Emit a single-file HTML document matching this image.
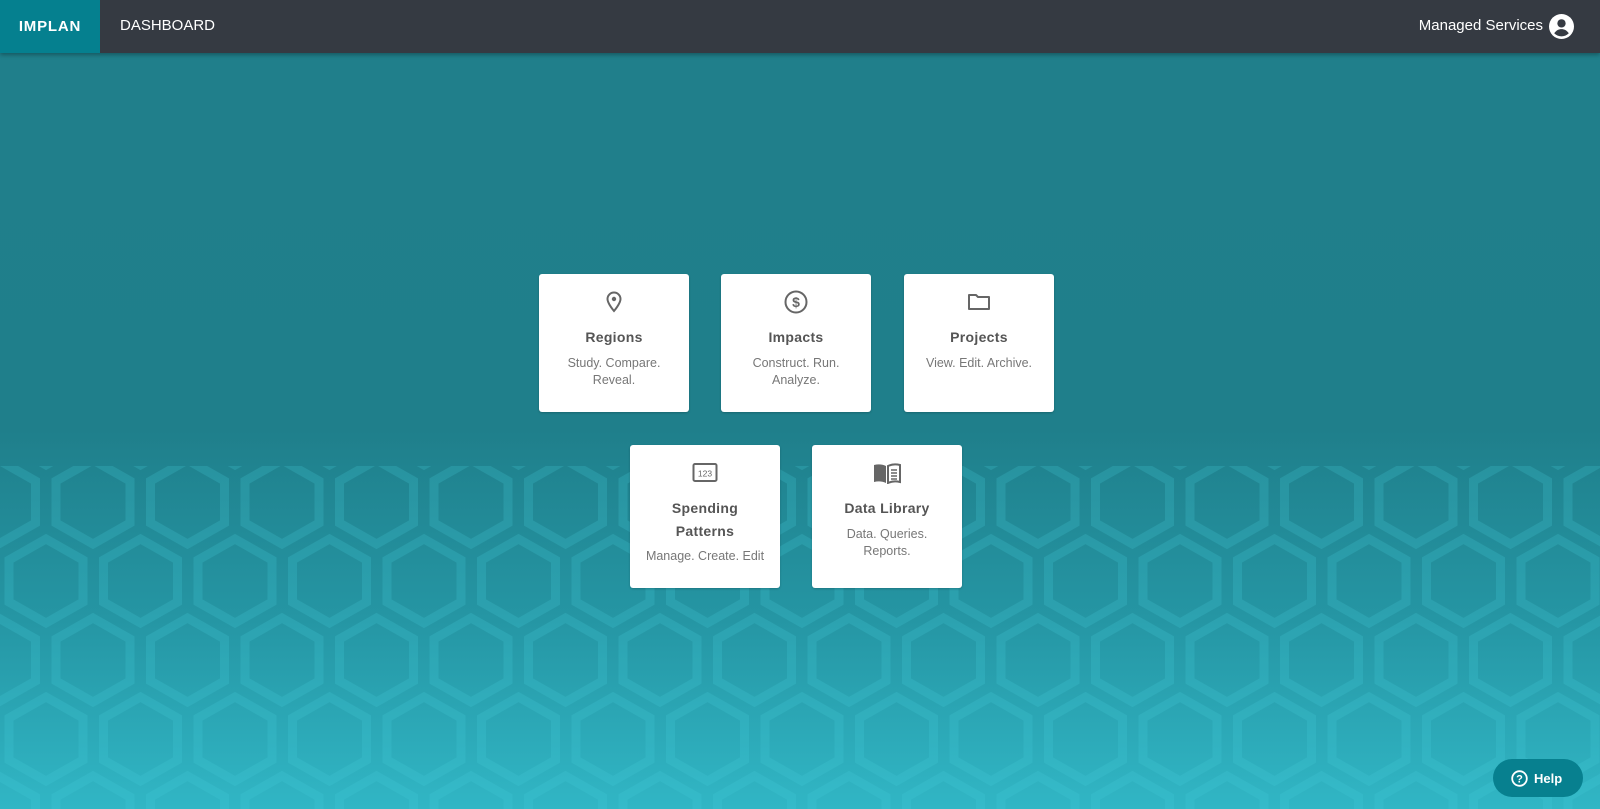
<!DOCTYPE html>
<html><head><meta charset="utf-8"><style>
*{margin:0;padding:0;box-sizing:border-box}
body{width:1600px;height:809px;overflow:hidden;font-family:"Liberation Sans",sans-serif;background:linear-gradient(#207f8b 0px,#1f7f8b 430px,#2596a4 620px,#31b6c5 809px);position:relative}
.hdr{position:absolute;left:0;top:0;width:1600px;height:53px;background:#353a42;box-shadow:0 2px 4px rgba(0,0,0,.3);z-index:3}
.logo{position:absolute;left:0;top:0;width:100px;height:53px;background:#05808f;color:#fff;font-weight:bold;font-size:15px;line-height:53px;text-align:center;letter-spacing:.8px}
.dash{position:absolute;left:120px;top:17px;color:#fff;font-size:15px}
.user{position:absolute;right:57px;top:17px;color:#fff;font-size:15px}
.av{position:absolute;left:1549px;top:14px;width:25px;height:25px}
svg.bg{position:absolute;left:0;top:0;z-index:0}
.card{position:absolute;background:#fff;border-radius:3px;width:150px;text-align:center;z-index:2;box-shadow:0 1px 2px rgba(0,0,0,.2)}
.card svg{display:block;margin:0 auto}
.t{font-weight:bold;font-size:14px;color:#555;line-height:23px;letter-spacing:.3px}
.s{font-size:12.5px;color:#777;line-height:17px;margin-top:6px}
.help{position:absolute;left:1493px;top:759px;width:90px;height:38px;border-radius:19px;background:#07808f;color:#fff;font-weight:bold;font-size:13px;z-index:3}
</style></head><body>
<svg class="bg" width="1600" height="809">
<defs>
<pattern id="hx" patternUnits="userSpaceOnUse" x="46" y="455" width="94.5" height="158">
<g fill="none" stroke="rgba(70,205,220,0.22)" stroke-width="9">
<path d="M47 5L84 26V68L47 89L10 68V26Z"/>
<path d="M0 84L37 105V147L0 168L-37 147V105Z"/>
<path d="M94.5 84L131.5 105V147L94.5 168L57.5 147V105Z"/>
<path d="M0 -74L37 -53V-11L0 10L-37 -11V-53Z"/>
<path d="M94.5 -74L131.5 -53V-11L94.5 10L57.5 -11V-53Z"/>
<path d="M47 163L84 184V226L47 247L10 226V184Z"/>
</g></pattern>
</defs>
<rect y="466" width="1600" height="343" fill="url(#hx)"/>
</svg>
<div class="hdr"><div class="logo">IMPLAN</div><div class="dash">DASHBOARD</div><div class="user">Managed Services</div>
<svg class="av" viewBox="0 0 24 24"><circle cx="12" cy="12" r="12" fill="#fff"/><circle cx="12" cy="9" r="4" fill="#353a42"/><path d="M5 18.5c2-3 4.5-4 7-4s5 1 7 4c-2 2-4.5 3-7 3s-5-1-7-3z" fill="#353a42"/></svg></div>

<div class="card" style="left:539px;top:274px;height:138px;padding-top:16px">
<svg width="24" height="24" viewBox="0 0 24 24"><path d="M12 2.5a6.5 6.5 0 0 0-6.5 6.5c0 4.5 6.5 12 6.5 12s6.5-7.5 6.5-12A6.5 6.5 0 0 0 12 2.5z" fill="none" stroke="#666" stroke-width="2"/><circle cx="12" cy="9" r="2.2" fill="#666"/></svg>
<div class="t" style="margin-top:12px">Regions</div><div class="s">Study. Compare.<br>Reveal.</div></div>
<div class="card" style="left:721px;top:274px;height:138px;padding-top:16px">
<svg width="24" height="24" viewBox="0 0 24 24"><circle cx="12" cy="12" r="10.5" fill="none" stroke="#666" stroke-width="2"/><text x="12" y="17" font-size="14" font-family="Liberation Sans" text-anchor="middle" fill="#666" font-weight="bold">$</text></svg>
<div class="t" style="margin-top:12px">Impacts</div><div class="s">Construct. Run.<br>Analyze.</div></div>
<div class="card" style="left:904px;top:274px;height:138px;padding-top:16px">
<svg width="24" height="24" viewBox="0 0 24 24"><path d="M2 5h7l2 2h11v12H2z" fill="none" stroke="#666" stroke-width="2" stroke-linejoin="round"/></svg>
<div class="t" style="margin-top:12px">Projects</div><div class="s">View. Edit. Archive.</div></div>
<div class="card" style="left:630px;top:445px;height:143px;padding-top:17px">
<svg width="26" height="22" viewBox="0 0 26 22"><rect x="1.5" y="2" width="23" height="17" rx="1.5" fill="none" stroke="#666" stroke-width="2"/><text x="13" y="14.5" font-size="8.5" font-family="Liberation Sans" text-anchor="middle" fill="#666">123</text></svg>
<div class="t" style="margin-top:13px">Spending<br>Patterns</div><div class="s" style="margin-top:5px">Manage. Create. Edit</div></div>
<div class="card" style="left:812px;top:445px;height:143px;padding-top:17px">
<svg width="28" height="22" viewBox="0 0 28 22"><path d="M1 3c4-1 8-1 12 1v17c-4-2-8-2-12-1z" fill="#666"/><path d="M15 4c4-2 8-2 12-1v17c-4-1-8-1-12 1z" fill="none" stroke="#666" stroke-width="2"/><path d="M18 8h6M18 11h6M18 14h6M18 17h6" stroke="#666" stroke-width="1.5"/></svg>
<div class="t" style="margin-top:13px">Data Library</div><div class="s">Data. Queries.<br>Reports.</div></div>

<div class="help"><svg style="position:absolute;left:18px;top:11px" width="17" height="17" viewBox="0 0 17 17"><circle cx="8.5" cy="8.5" r="7.3" fill="none" stroke="#fff" stroke-width="1.8"/><text x="8.5" y="12.5" font-size="11" font-weight="bold" font-family="Liberation Sans" text-anchor="middle" fill="#fff">?</text></svg><span style="position:absolute;left:41px;top:12px">Help</span></div>
</body></html>
